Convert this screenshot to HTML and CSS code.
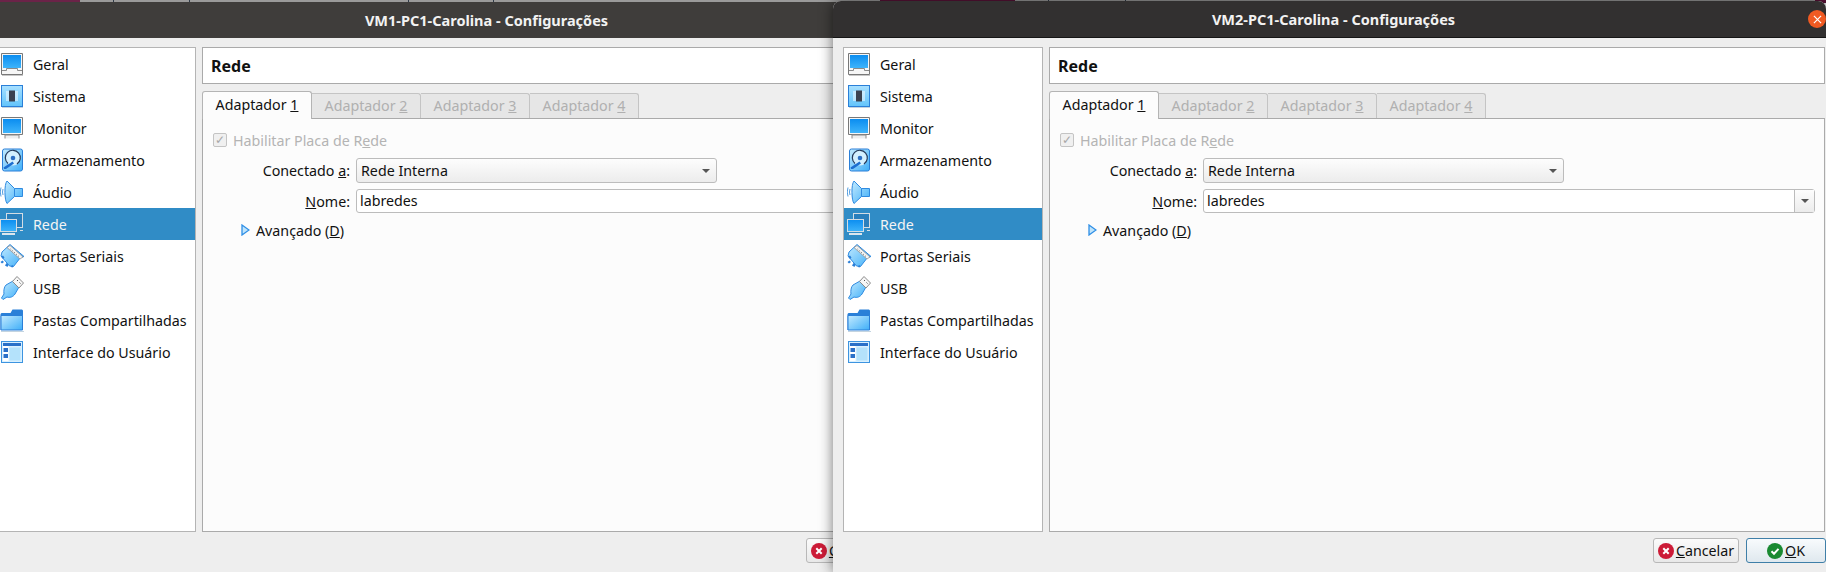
FILE: index.html
```html
<!DOCTYPE html>
<html lang="pt-BR">
<head>
    <meta charset="UTF-8">
    <meta name="viewport" content="width=device-width, initial-scale=1.0">
    <title>VirtualBox - Configurações</title>
    <link rel="stylesheet" href="styles.css">
</head>
<body>

<!-- icon sheet, used by both windows -->
<svg class="icon-sheet" aria-hidden="true">
    <defs>
        <linearGradient id="screen" x1="0" y1="0" x2="0" y2="1">
            <stop offset="0" stop-color="#0b8df0"/>
            <stop offset="1" stop-color="#3eb4fb"/>
        </linearGradient>
        <linearGradient id="pale" x1="0" y1="0" x2="1" y2="1">
            <stop offset="0" stop-color="#c4ebff"/>
            <stop offset="1" stop-color="#3eaef8"/>
        </linearGradient>
        <linearGradient id="paledown" x1="0" y1="0" x2="0" y2="1">
            <stop offset="0" stop-color="#a8e0ff"/>
            <stop offset="1" stop-color="#62c4fb"/>
        </linearGradient>
        <symbol id="i-geral" viewBox="0 0 24 24">
            <path d="M1.500 1.500h21v21h-21z" fill="#f6f6f6" stroke="#787878"/>
            <rect x="3" y="3" width="18" height="13" fill="url(#screen)"/>
            <path d="M2 18.500h4.500v-2h11v2h4.500" fill="none" stroke="#8a8a8a"/>
            <path d="M2 23.500h21" stroke="#c8c8c8"/>
        </symbol>
        <symbol id="i-sistema" viewBox="0 0 24 24">
            <rect x="1.500" y="1.500" width="21" height="21" fill="url(#paledown)" stroke="#2a7fd8"/>
            <path d="M6 8h12M6 10h12M6 12h12M6 14h12M6 16h12" stroke="#fff"/>
            <rect x="9" y="6.500" width="6" height="11" fill="#3a4150"/>
            <path d="M2 23.500h21" stroke="#c4d4e0"/>
        </symbol>
        <symbol id="i-monitor" viewBox="0 0 24 24">
            <path d="M1.500 1.500h21v17h-21z" fill="#f6f6f6" stroke="#787878"/>
            <rect x="3" y="3" width="18" height="14" fill="url(#screen)"/>
            <path d="M5 22.500v-3.500h14v3.500" fill="#eee" stroke="#8a8a8a"/>
        </symbol>
        <symbol id="i-disco" viewBox="0 0 24 24">
            <rect x="2.500" y="1" width="20" height="22" rx="2" fill="url(#pale)" stroke="#2a7fd8"/>
            <circle cx="13" cy="10" r="7.500" fill="#d4f0ff"/>
            <path d="M8 15.500a7.500 7.500 0 1 1 9 .5" fill="none" stroke="#263a5a" stroke-width="1.200"/>
            <circle cx="13" cy="10" r="2.300" fill="#2d6fc4"/>
            <path d="M3.500 19.500l9-6 1.500 2-8 5.500h-2z" fill="#1d6fd0"/>
        </symbol>
        <symbol id="i-audio" viewBox="0 0 24 24">
            <path d="M7 1l7.500 7.500h8v8h-8l-7.500 7c-2.500-3-3-19 0-22.500z" fill="url(#pale)" stroke="#2f8ae0"/>
            <path d="M14.500 8.500v8" stroke="#2f8ae0"/>
            <path d="M3 9q-1 3 0 6M1 7.500q-1.500 4.500 0 9" fill="none" stroke="#4f9ce0"/>
        </symbol>
        <symbol id="i-rede" viewBox="0 0 24 24">
            <rect x="6.500" y="1.500" width="16" height="14" fill="#2a7fbc" stroke="#d4dde4"/>
            <path d="M20 18.500h3" stroke="#d4dde4"/>
            <rect x="0.500" y="7.500" width="16" height="12" fill="url(#screen)" stroke="#d4dde4"/>
            <path d="M2 22h13" stroke="#dce6ee" stroke-width="2"/>
        </symbol>
        <symbol id="i-serial" viewBox="0 0 24 24">
            <path d="M10 .500l14 12-3.500 1-7 9-4-.5-8.500-10 1-4z" fill="url(#pale)" stroke="#2f8ae0"/>
            <path d="M10 1.500l13 11.500-3 2-13-11.500z" fill="#f4f4f4" stroke="#8a8a8a" stroke-width=".7"/>
            <path d="M10.500 5l9 8" stroke="#666" stroke-dasharray="1 1.500"/>
            <path d="M1 12.500l2-1 1.500 2-1.500 1.500zM5 21.500l1.500-2.500 2 1.500-1 2.500zM11 23l1-2 1.500 1-1 1.500zM.5 18l2-1.500 1.500 1.500-2 1.500z" fill="#2a7fd8"/>
        </symbol>
        <symbol id="i-usb" viewBox="0 0 24 24">
            <path d="M6 9l7-4 6 6-4 7c-2 3-5 4-8 3l-4 2.500-1.500-1.500 2.500-4c-.500-3 0-7 2-9z" fill="url(#pale)" stroke="#2f8ae0"/>
            <path d="M17 .500l6.500 6.500-4.500 5-6.500-6.500z" fill="#f6f6f6" stroke="#8a8a8a"/>
            <path d="M17 4l1 1M19.500 6.500l1 1" stroke="#555"/>
        </symbol>
        <symbol id="i-pasta" viewBox="0 0 24 24">
            <path d="M.5 6l1-1h9l2-3.500h9.500l1 1v19.500h-22.500z" fill="#2a80d8"/>
            <path d="M1 7.500h21.500v14.500h-21.500z" fill="url(#pale)" stroke="#2a7fd8"/>
            <path d="M1 23.500h23" stroke="#c4d4e0"/>
        </symbol>
        <symbol id="i-janela" viewBox="0 0 24 24">
            <rect x="1.500" y="1.500" width="21" height="21" fill="#d8f0ff" stroke="#3d94e0"/>
            <rect x="3" y="3" width="18" height="3" fill="#2a70c8"/>
            <rect x="3" y="6" width="5.500" height="15" fill="#fff"/>
            <rect x="3.500" y="8" width="4.500" height="4" fill="#2a70c8"/>
            <rect x="3.500" y="14" width="4.500" height="4" fill="#2a70c8"/>
            <rect x="9.500" y="7.500" width="11" height="13" fill="#b4e2fb"/>
        </symbol>
        <symbol id="i-arrow" viewBox="0 0 9 12">
            <path d="M1 1l7 5-7 5z" fill="#bfe4fb" stroke="#2f8fe6" stroke-width="1.300"/>
        </symbol>
    </defs>
</svg>

<div class="desktop-strip"></div>

<div class="window window-back">
    <div class="titlebar">VM1-PC1-Carolina - Configurações</div>
    <div class="window-body">
        <ul class="side-list">
            <li class="side-item"><svg class="side-icon"><use href="#i-geral"/></svg><span class="side-label">Geral</span></li>
            <li class="side-item"><svg class="side-icon"><use href="#i-sistema"/></svg><span class="side-label">Sistema</span></li>
            <li class="side-item"><svg class="side-icon"><use href="#i-monitor"/></svg><span class="side-label">Monitor</span></li>
            <li class="side-item"><svg class="side-icon"><use href="#i-disco"/></svg><span class="side-label">Armazenamento</span></li>
            <li class="side-item"><svg class="side-icon"><use href="#i-audio"/></svg><span class="side-label">Áudio</span></li>
            <li class="side-item selected"><svg class="side-icon"><use href="#i-rede"/></svg><span class="side-label">Rede</span></li>
            <li class="side-item"><svg class="side-icon"><use href="#i-serial"/></svg><span class="side-label">Portas Seriais</span></li>
            <li class="side-item"><svg class="side-icon"><use href="#i-usb"/></svg><span class="side-label">USB</span></li>
            <li class="side-item"><svg class="side-icon"><use href="#i-pasta"/></svg><span class="side-label">Pastas Compartilhadas</span></li>
            <li class="side-item"><svg class="side-icon"><use href="#i-janela"/></svg><span class="side-label">Interface do Usuário</span></li>
        </ul>
        <div class="main-col">
            <div class="page-title">Rede</div>
            <div class="tabs">
                <div class="tab active">Adaptador <u>1</u></div>
                <div class="tab">Adaptador <u>2</u></div>
                <div class="tab">Adaptador <u>3</u></div>
                <div class="tab">Adaptador <u>4</u></div>
            </div>
            <div class="tab-pane">
                <label class="check-row"><span class="check-box">✓</span><span>Habilitar Placa de R<u>e</u>de</span></label>
                <div class="form-row">
                    <span class="form-label">Conectado <u>a</u>:</span>
                    <div class="combo">Rede Interna<span class="caret"></span></div>
                </div>
                <div class="form-row">
                    <span class="form-label"><u>N</u>ome:</span>
                    <div class="name-field"><span class="name-text">labredes</span><span class="name-drop"><span class="caret"></span></span></div>
                </div>
                <div class="advanced"><svg class="arrow"><use href="#i-arrow"/></svg><span>Avançado (<u>D</u>)</span></div>
            </div>
        </div>
    </div>
    <div class="button-row">
        <button class="btn btn-cancel"><svg class="btn-icon" viewBox="0 0 16 16"><circle cx="8" cy="8" r="8" fill="#cc1b37"/><path d="M5.300 5.300l5.400 5.400M10.700 5.300l-5.400 5.400" stroke="#fff" stroke-width="2"/></svg><span><u>C</u>ancelar</span></button>
        <button class="btn btn-ok"><svg class="btn-icon" viewBox="0 0 16 16"><circle cx="8" cy="8" r="8" fill="#1a8a32"/><path d="M4.500 8.200l2.500 2.500 4.500-4.800" fill="none" stroke="#fff" stroke-width="2"/></svg><span><u>O</u>K</span></button>
    </div>
</div>

<div class="window window-front">
    <div class="titlebar">VM2-PC1-Carolina - Configurações<span class="close-btn"><svg viewBox="0 0 10 10"><path d="M1 1l8 8M9 1l-8 8" stroke="#fff" stroke-width="1.300"/></svg></span></div>
    <div class="window-body">
        <ul class="side-list">
            <li class="side-item"><svg class="side-icon"><use href="#i-geral"/></svg><span class="side-label">Geral</span></li>
            <li class="side-item"><svg class="side-icon"><use href="#i-sistema"/></svg><span class="side-label">Sistema</span></li>
            <li class="side-item"><svg class="side-icon"><use href="#i-monitor"/></svg><span class="side-label">Monitor</span></li>
            <li class="side-item"><svg class="side-icon"><use href="#i-disco"/></svg><span class="side-label">Armazenamento</span></li>
            <li class="side-item"><svg class="side-icon"><use href="#i-audio"/></svg><span class="side-label">Áudio</span></li>
            <li class="side-item selected"><svg class="side-icon"><use href="#i-rede"/></svg><span class="side-label">Rede</span></li>
            <li class="side-item"><svg class="side-icon"><use href="#i-serial"/></svg><span class="side-label">Portas Seriais</span></li>
            <li class="side-item"><svg class="side-icon"><use href="#i-usb"/></svg><span class="side-label">USB</span></li>
            <li class="side-item"><svg class="side-icon"><use href="#i-pasta"/></svg><span class="side-label">Pastas Compartilhadas</span></li>
            <li class="side-item"><svg class="side-icon"><use href="#i-janela"/></svg><span class="side-label">Interface do Usuário</span></li>
        </ul>
        <div class="main-col">
            <div class="page-title">Rede</div>
            <div class="tabs">
                <div class="tab active">Adaptador <u>1</u></div>
                <div class="tab">Adaptador <u>2</u></div>
                <div class="tab">Adaptador <u>3</u></div>
                <div class="tab">Adaptador <u>4</u></div>
            </div>
            <div class="tab-pane">
                <label class="check-row"><span class="check-box">✓</span><span>Habilitar Placa de R<u>e</u>de</span></label>
                <div class="form-row">
                    <span class="form-label">Conectado <u>a</u>:</span>
                    <div class="combo">Rede Interna<span class="caret"></span></div>
                </div>
                <div class="form-row">
                    <span class="form-label"><u>N</u>ome:</span>
                    <div class="name-field"><span class="name-text">labredes</span><span class="name-drop"><span class="caret"></span></span></div>
                </div>
                <div class="advanced"><svg class="arrow"><use href="#i-arrow"/></svg><span>Avançado (<u>D</u>)</span></div>
            </div>
        </div>
    </div>
    <div class="button-row">
        <button class="btn btn-cancel"><svg class="btn-icon" viewBox="0 0 16 16"><circle cx="8" cy="8" r="8" fill="#cc1b37"/><path d="M5.300 5.300l5.400 5.400M10.700 5.300l-5.400 5.400" stroke="#fff" stroke-width="2"/></svg><span><u>C</u>ancelar</span></button>
        <button class="btn btn-ok"><svg class="btn-icon" viewBox="0 0 16 16"><circle cx="8" cy="8" r="8" fill="#1a8a32"/><path d="M4.500 8.200l2.500 2.500 4.500-4.800" fill="none" stroke="#fff" stroke-width="2"/></svg><span><u>O</u>K</span></button>
    </div>
</div>

</body>
</html>
```

FILE: styles.css
```css
html, body {
    margin: 0;
    padding: 0;
    height: 572px;
    overflow: hidden;
}

body {
    position: relative;
    font-family: "Noto Sans", sans-serif;
    font-size: 14.25px;
    color: #111;
    background-color: #eeeeee;
}

.icon-sheet {
    position: absolute;
    width: 0;
    height: 0;
}

/* wallpaper and panel ticks showing above the windows */
.desktop-strip {
    height: 3px;
    background-image: linear-gradient(90deg,
        #6b2348 0 80px, #9a9a9a 80px 113px, #2f3a48 113px 114px,
        #9a9a9a 114px 189px, #2f3a48 189px 190px,
        #9a9a9a 190px 408px, #2f3a48 408px 409px,
        #9a9a9a 409px 493px, #2f3a48 493px 494px,
        #9a9a9a 494px 880px, #5a1238 880px 1015px,
        #9a9a9a 1015px 1048px, #2f3a48 1048px 1049px,
        #9a9a9a 1049px 1125px, #2f3a48 1125px 1126px,
        #9a9a9a 1126px 1815px, #5a1238 1815px);
}

/* windows sit on a free canvas */
.window {
    position: absolute;
    width: 993px;
    background-color: #eeeeee;
    border-radius: 8px 8px 0 0;
}

.window-back {
    top: 2px;
    left: -14px;
    height: 570px;
}

.window-front {
    top: 1px;
    left: 833px;
    height: 571px;
    box-shadow: 0 0 14px rgba(0, 0, 0, 0.55);
}

.titlebar {
    position: relative;
    height: 36px;
    line-height: 36px;
    padding-left: 8px;
    box-sizing: border-box;
    text-align: center;
    font-weight: bold;
    font-size: 14.5px;
    color: #f2f2f2;
    border-radius: 8px 8px 0 0;
    background-color: #3f3d3b;
}

.window-front .titlebar {
    height: 37px;
    line-height: 37px;
    background-color: #323030;
    border-bottom: 1px solid #161616;
}

.close-btn {
    position: absolute;
    top: 9px;
    right: 0;
    display: flex;
    align-items: center;
    justify-content: center;
    width: 18px;
    height: 18px;
    border-radius: 50%;
    background-color: #f05a22;
}

.close-btn svg {
    width: 9px;
    height: 9px;
}

.window-body {
    display: flex;
    gap: 6px;
    padding: 9px 1px 0 10px;
}

.side-list {
    list-style: none;
    flex: none;
    box-sizing: border-box;
    width: 200px;
    height: 485px;
    margin: 0;
    padding: 0;
    background-color: #fff;
    border: 1px solid #b4b4b4;
}

.side-item {
    display: flex;
    align-items: center;
    gap: 9px;
    height: 32px;
    padding-left: 3px;
}

.side-item.selected {
    background-color: #308cc6;
    color: #f4f4f4;
}

.side-icon {
    flex: none;
    width: 24px;
    height: 24px;
}

.side-label {
    margin-top: 1px;
    white-space: nowrap;
}

.main-col {
    flex: 1;
    display: flex;
    flex-direction: column;
}

.page-title {
    box-sizing: border-box;
    height: 37px;
    line-height: 36px;
    padding-left: 8px;
    font-weight: bold;
    font-size: 16px;
    color: #111;
    background-color: #fff;
    border: 1px solid #aaaaaa;
}

.tabs {
    display: flex;
    align-items: flex-end;
    height: 28px;
    margin-top: 7px;
    margin-bottom: -1px;
}

.tab {
    box-sizing: border-box;
    height: 26px;
    width: 109px;
    line-height: 24px;
    text-align: center;
    white-space: nowrap;
    color: #b0b0b0;
    background-color: #e6e6e6;
    border: 1px solid #c4c4c4;
    border-bottom-color: #aaaaaa;
    border-left: none;
    border-radius: 0 3px 0 0;
}

.tab.active {
    position: relative;
    width: 110px;
    height: 28px;
    line-height: 26px;
    color: #111;
    background-color: #fcfcfc;
    border: 1px solid #b4b4b4;
    border-bottom: none;
    border-radius: 3px 3px 0 0;
    z-index: 1;
}

.tab-pane {
    box-sizing: border-box;
    height: 414px;
    padding: 11px 9px 0 10px;
    background-color: #fcfcfc;
    border: 1px solid #aaaaaa;
}

.check-row {
    display: flex;
    align-items: center;
    gap: 6px;
    height: 20px;
    color: #b4b4b4;
}

.check-box {
    box-sizing: border-box;
    width: 14px;
    height: 14px;
    line-height: 12px;
    text-align: center;
    font-size: 12px;
    color: #a8a8a8;
    background-color: #f0f0f0;
    border: 1px solid #c4c4c4;
    border-radius: 2px;
}

.form-row {
    display: flex;
    align-items: center;
    gap: 6px;
    margin-top: 6px;
}

.check-row + .form-row {
    margin-top: 8px;
}

.form-label {
    width: 137px;
    text-align: right;
    white-space: nowrap;
}

.combo {
    position: relative;
    box-sizing: border-box;
    width: 361px;
    height: 25px;
    line-height: 23px;
    padding-left: 4px;
    background: linear-gradient(#fdfdfd, #ececec);
    border: 1px solid #bcbcbc;
    border-radius: 3px;
}

.combo .caret {
    position: absolute;
    top: 10px;
    right: 6px;
}

.caret {
    display: block;
    width: 0;
    height: 0;
    border-left: 4px solid transparent;
    border-right: 4px solid transparent;
    border-top: 4px solid #555;
}

.name-field {
    display: flex;
    flex: 1;
    box-sizing: border-box;
    height: 24px;
    background-color: #fff;
    border: 1px solid #bcbcbc;
    border-radius: 3px;
}

.name-text {
    flex: 1;
    line-height: 22px;
    padding-left: 3px;
}

.name-drop {
    display: flex;
    align-items: center;
    justify-content: center;
    width: 19px;
    background: linear-gradient(#fdfdfd, #ececec);
    border-left: 1px solid #bcbcbc;
}

.advanced {
    display: flex;
    align-items: center;
    gap: 6px;
    height: 20px;
    margin-top: 7px;
    margin-left: 28px;
}

.arrow {
    flex: none;
    width: 9px;
    height: 12px;
}

.button-row {
    display: flex;
    justify-content: flex-end;
    gap: 7px;
    margin-top: 6px;
}

.btn {
    display: flex;
    align-items: center;
    justify-content: center;
    gap: 2px;
    box-sizing: border-box;
    height: 25px;
    padding: 0;
    font: inherit;
    color: #111;
    background: linear-gradient(#fbfbfb, #e8e8e8);
    border: 1px solid #b8b8b8;
    border-radius: 3px;
}

.btn-cancel {
    width: 86px;
}

.btn-ok {
    width: 80px;
    background: linear-gradient(#f8fbfd, #dfe8ee);
    border-color: #3f7fa8;
}

.btn-icon {
    width: 16px;
    height: 16px;
}
```
